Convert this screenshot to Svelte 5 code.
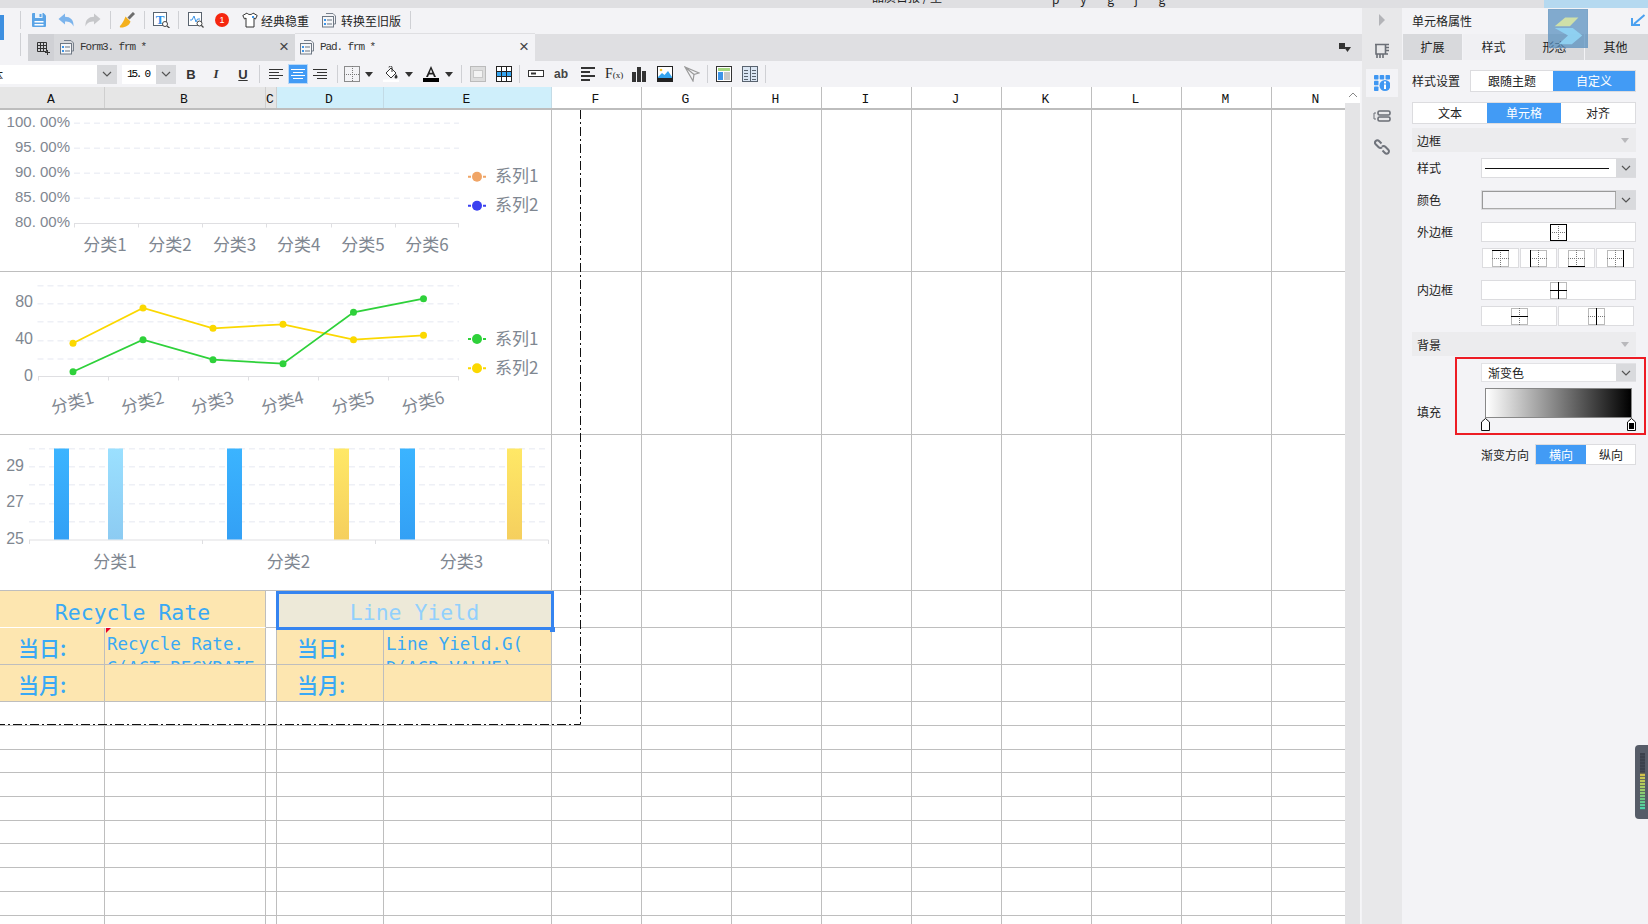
<script>
  const letters = ['A','B','C','D','E','F','G','H','I','J','K','L','M','N'];
  const rest = letters.slice(5);
  const lowerRows = Array.from({ length: 10 });
  const c1x = [105, 170, 234.6, 298.8, 363, 427];
  const c2x = [73, 143, 213, 283, 353.5, 423.5];
  const green = [371.7, 339.7, 359.7, 363.7, 312.3, 298.7];
  const yellow = [343.3, 308, 328.3, 324.3, 339.7, 335.3];
  const pts = (ys) => ys.map((y, i) => `${c2x[i]},${y}`).join(' ');
  const bars = [
    { x: 54, g: 'gBlue' }, { x: 108, g: 'gLight' }, { x: 227, g: 'gBlue' },
    { x: 334, g: 'gYellow' }, { x: 400, g: 'gBlue' }, { x: 507, g: 'gYellow' }
  ];
</script>

{#snippet formIcon()}
  <svg class="ic" viewBox="0 0 16 16">
    <path d="M5 1.500h7l2.500 2.500v8H12" fill="none" stroke="#77808c" />
    <rect x="1.500" y="4.500" width="11" height="10.500" fill="#f6f7f9" stroke="#6f7884" />
    <rect x="3" y="7" width="2" height="2" fill="#3c94e8" />
    <rect x="3" y="11" width="2" height="2" fill="#3c94e8" />
    <rect x="6" y="7" width="5" height="2" fill="#aeb5bd" />
    <rect x="6" y="11" width="5" height="2" fill="#aeb5bd" />
  </svg>
{/snippet}

{#snippet caret(cls)}
  <svg class="caret {cls}" viewBox="0 0 8 5"><path d="M0 0h8L4 5z" fill="#333" /></svg>
{/snippet}

{#snippet chevron()}
  <svg class="chev" viewBox="0 0 10 6"><path d="M1 1l4 4 4-4" fill="none" stroke="#555" stroke-width="1.200" /></svg>
{/snippet}

{#snippet borderIcon(kind)}
  <svg class="bi" viewBox="0 0 17 17">
    <g fill="none" stroke="#777" stroke-dasharray="1 1">
      <rect x="0.500" y="0.500" width="16" height="16" />
      <path d="M8.500 0v17M0 8.500h17" />
    </g>
    <g fill="none" stroke="#000">
      {#if kind === 'outer'}<rect x="0.500" y="0.500" width="16" height="16" />{/if}
      {#if kind === 'top'}<path d="M0 .5h17" />{/if}
      {#if kind === 'left'}<path d="M.5 0v17" />{/if}
      {#if kind === 'bottom'}<path d="M0 16.500h17" />{/if}
      {#if kind === 'right'}<path d="M16.500 0v17" />{/if}
      {#if kind === 'inner' || kind === 'h'}<path d="M0 8.500h17" />{/if}
      {#if kind === 'inner' || kind === 'v'}<path d="M8.500 0v17" />{/if}
    </g>
  </svg>
{/snippet}

{#snippet legend(y, color, label)}
  <line x1="468" x2="486" y1={y} y2={y} stroke={color} stroke-width="2" stroke-dasharray="3 2" />
  <circle cx="477" cy={y} r="5" fill={color} />
  <text class="cjk wide" x="495" y={y - 2}>{label}</text>
{/snippet}

<div class="app">
  <div class="topbar">
    <span class="frag">品质日报 / 坐</span>
    <span class="frag descend">p y g j g</span>
    <span class="topblue"></span>
  </div>

  <div class="main">
    <div class="work">
      <div class="toolbar">
        <span class="logo"></span>
        <span class="sep m16"></span>
        <svg class="ic m10" viewBox="0 0 16 16">
          <path d="M1 2a1 1 0 0 1 1-1h10.500L15 3.500V14a1 1 0 0 1-1 1H2a1 1 0 0 1-1-1z" fill="#5ba4e6" />
          <rect x="4" y="1" width="7.500" height="5" fill="#eaf3fb" />
          <rect x="8.500" y="2" width="2" height="3" fill="#5ba4e6" />
          <rect x="3.500" y="9" width="9" height="1.500" fill="#fff" />
          <rect x="3.500" y="12" width="9" height="1.500" fill="#fff" />
        </svg>
        <svg class="ic m11" viewBox="0 0 16 16"><path d="M.5 7L7 1.500v3.200c5.500 0 9 3.300 8.500 9.800-1.500-3.800-4.500-5-8.500-5v3z" fill="#7cb4ec" /></svg>
        <svg class="ic m11" viewBox="0 0 16 16"><path d="M15.500 7L9 1.500v3.200c-5.500 0-9 3.300-8.500 9.800 1.500-3.800 4.500-5 8.500-5v3z" fill="#c6c7ca" /></svg>
        <span class="sep m9"></span>
        <svg class="ic m8" viewBox="0 0 16 16">
          <path d="M15 1l-5.500 5.500" stroke="#6d6d6d" stroke-width="3" />
          <path d="M6.500 4.500l5 5C10.500 13 7 15.500 2 15.500c-1 0-1.500-.5-1-1.500C3 12 5 8.500 6.500 4.500z" fill="#f4b01c" />
        </svg>
        <span class="sep m9"></span>
        <svg class="ic wide m8" viewBox="0 0 17 16">
          <rect x=".5" y=".5" width="13" height="13" fill="#fff" stroke="#59636f" />
          <text class="tglyph" x="7" y="11.500">T</text>
          <circle cx="12" cy="12" r="2.500" fill="#fff" stroke="#444" />
          <path d="M14 14l2.500 2" stroke="#444" stroke-width="1.300" />
        </svg>
        <span class="sep m8"></span>
        <svg class="ic m9" viewBox="0 0 16 16">
          <rect x=".5" y=".5" width="13" height="13" fill="#fff" stroke="#59636f" />
          <path d="M2 8h2l2-4 2 6 1.500-3H12" fill="none" stroke="#3c94e8" />
          <circle cx="11.500" cy="11.500" r="2.500" fill="#fff" stroke="#444" />
          <path d="M13.500 13.500l2 2" stroke="#444" stroke-width="1.300" />
        </svg>
        <span class="badge m11">1</span>
        <svg class="ic m13" viewBox="0 0 16 16">
          <path d="M5 1L.8 3.500 2.500 7 4 6v9h8V6l1.500 1 1.700-3.500L11 1c-1 2-5 2-6 0z" fill="#fff" stroke="#333" />
          <rect x="10" y="4" width="2" height="2" fill="#3c94e8" />
        </svg>
        <span class="tbtext m3">经典稳重</span>
        <span class="m12 ib">{@render formIcon()}</span>
        <span class="tbtext m4">转换至旧版</span>
        <span class="sep m9"></span>
      </div>

      <div class="tabs">
        <div class="tabs-left"><span class="sep"></span></div>
        <div class="tab-grid">
          <svg class="ic" viewBox="0 0 16 16">
            <path d="M2.500 2.500h9v9h-9zM2.500 5.500h9M2.500 8.500h9M5.500 2.500v9M8.500 2.500v9" fill="none" stroke="#333" />
            <path d="M12.500 10v5M10 12.500h5" stroke="#333" fill="none" />
          </svg>
        </div>
        <div class="tab">
          {@render formIcon()}
          <span class="tabname">Form3. frm *</span>
          <span class="close">×</span>
        </div>
        <div class="tab on">
          {@render formIcon()}
          <span class="tabname">Pad. frm *</span>
          <span class="close">×</span>
        </div>
        <div class="tabs-fill">
          <svg class="pin" viewBox="0 0 12 9"><path d="M0 0h6v6H0z" fill="#333" /><path d="M5 4h7L8.500 9z" fill="#333" /></svg>
        </div>
      </div>

      <div class="format">
        <div class="fontsel"><span class="fontname">体</span><span class="fbtn">{@render chevron()}</span></div>
        <div class="sizesel"><span class="sizeval">15. 0</span><span class="fbtn">{@render chevron()}</span></div>
        <span class="ftxt bold m7">B</span>
        <span class="ftxt ital m9">I</span>
        <span class="ftxt under m11">U</span>
        <span class="sep m8"></span>
        <svg class="ic m8" viewBox="0 0 16 16"><path d="M1 3.500h14M1 6.500h10M1 9.500h14M1 12.500h10" stroke="#333" /></svg>
        <span class="alignon m4">
          <svg class="ic" viewBox="0 0 16 16"><path d="M1 3.500h14M3 6.500h10M1 9.500h14M3 12.500h10" stroke="#fff" /></svg>
        </span>
        <svg class="ic m4" viewBox="0 0 16 16"><path d="M1 3.500h14M5 6.500h10M1 9.500h14M5 12.500h10" stroke="#333" /></svg>
        <span class="sep m9"></span>
        <svg class="ic m6" viewBox="0 0 16 16"><rect x=".5" y=".5" width="15" height="15" fill="none" stroke="#222" stroke-dasharray="1 1" /><path d="M8.500 0v16M0 8.500h16" stroke="#777" stroke-dasharray="1 1" /></svg>
        {@render caret('m5')}
        <svg class="ic m10" viewBox="0 0 16 16">
          <path d="M3 7l5-5 5 5-5 5z" fill="#fff" stroke="#333" />
          <path d="M6 1.500a1.500 1.500 0 0 1 3 0V6" fill="none" stroke="#333" />
          <path d="M13 8c1 1.500 1.500 2 1.500 3a1.500 1.500 0 0 1-3 0" fill="#333" />
          <rect y="13.500" width="16" height="2.500" fill="#fff" />
        </svg>
        {@render caret('m6')}
        <svg class="ic m10" viewBox="0 0 16 16">
          <path d="M8 0L3 11h2l1-2.600h4L11 11h2L8 0zM6.700 6.700L8 3.200l1.300 3.500z" fill="#222" />
          <rect y="12" width="16" height="4" fill="#000" />
        </svg>
        {@render caret('m6')}
        <span class="sep m8"></span>
        <svg class="ic m8" viewBox="0 0 16 16"><rect x=".5" y=".5" width="15" height="15" fill="#ddd" stroke="#bbb" /><rect x="3.500" y="4.500" width="9" height="7" fill="#f3f3f3" stroke="#c8c8c8" /></svg>
        <svg class="ic m10" viewBox="0 0 16 16">
          <rect x=".5" y=".5" width="15" height="15" fill="#fff" stroke="#222" />
          <rect x="1" y="5" width="14" height="5" fill="#35a4ee" />
          <path d="M0 5.500h16M0 10.500h16M5.500 0v16M10.500 0v16" stroke="#222" />
        </svg>
        <span class="sep m7"></span>
        <svg class="ic m8" viewBox="0 0 16 16"><rect x=".5" y="4.500" width="15" height="6" fill="#fff" stroke="#333" /><path d="M3 7.500h5" stroke="#333" stroke-width="2" /></svg>
        <span class="abtxt m9">ab</span>
        <svg class="ic m11" viewBox="0 0 16 16"><path d="M1 2h14M1 6h9M1 10h14M1 14h9" stroke="#333" stroke-width="2" /></svg>
        <span class="fxtxt m9">F<small>(x)</small></span>
        <svg class="ic m10" viewBox="0 0 16 16"><path d="M1 6h4v10H1zM6 1h4v15H6zM11 5h4v11h-4z" fill="#333" /></svg>
        <svg class="ic m10" viewBox="0 0 16 16">
          <rect x=".5" y=".5" width="15" height="15" fill="#fff" stroke="#222" />
          <circle cx="4" cy="4" r="1.300" fill="#f2c230" />
          <path d="M1 11l4-4 2.500 2L11 5l4 6v1H1z" fill="#35a4ee" />
          <rect y="12" width="16" height="4" fill="#222" />
        </svg>
        <svg class="ic m11" viewBox="0 0 16 16"><path d="M1 1l14 6-5 1.500L9 15z M1 1l9 7.500" fill="none" stroke="#9a9a9a" stroke-width="1.200" /></svg>
        <span class="sep m7"></span>
        <svg class="ic m8" viewBox="0 0 16 16">
          <rect x=".5" y=".5" width="15" height="15" fill="#fff" stroke="#333" />
          <rect x="2" y="2" width="12" height="3" fill="#a6d880" />
          <rect x="2" y="6" width="5" height="8" fill="#3c94e8" />
          <rect x="8" y="6" width="6" height="8" fill="#c8c8c8" />
        </svg>
        <svg class="ic m10" viewBox="0 0 16 16">
          <rect x=".5" y=".5" width="15" height="15" fill="#dbe6f3" stroke="#59636f" />
          <path d="M8.500 0v16M2 4.500h4M2 7.500h4M2 10.500h4M2 13.500h4M10 4.500h4M10 7.500h4M10 10.500h4M10 13.500h4" stroke="#59636f" />
        </svg>
        <span class="sep m7"></span>
      </div>

      <div class="sheetwrap">
        <div class="sheet">
          <div class="row head">
            {#each letters as l, i}
              <div class="hcell" class:dim={i < 3} class:hl={i === 3 || i === 4}>{l}</div>
            {/each}
          </div>
          <div class="body">
            <div class="cell span5">
              <svg class="chart" width="552" height="162" viewBox="0 110 552 162">
                {#each [123.3, 148.3, 173.3, 198.3] as y}
                  <line class="grid" x1="74" x2="459" y1={y} y2={y} />
                {/each}
                <path class="axis" d="M74 223.500H459M74.500 223.500v4M138.500 223.500v4M202.500 223.500v4M266.500 223.500v4M331.500 223.500v4M395.500 223.500v4M458.500 223.500v4" />
                {#each [['100. 00%', 121], ['95. 00%', 146.7], ['90. 00%', 171.7], ['85. 00%', 196], ['80. 00%', 221]] as t}
                  <text class="num end" x="70" y={t[1]}>{t[0]}</text>
                {/each}
                {#each c1x as x, i}
                  <text class="cjk wide mid" {x} y="243">分类{i + 1}</text>
                {/each}
                {@render legend(176.7, '#f0a566', '系列1')}
                {@render legend(205.7, '#3a40f0', '系列2')}
              </svg>
            </div>
            {#each rest as _}<div class="cell"></div>{/each}

            <div class="cell span5">
              <svg class="chart" width="552" height="163" viewBox="0 272 552 163">
                {#each [285.7, 303.7, 321.7, 340.7, 359] as y}
                  <line class="grid" x1="37.500" x2="459" y1={y} y2={y} />
                {/each}
                <path class="axis" d="M38 376.500H459M38.500 376.500v4M108.500 376.500v4M178.500 376.500v4M248.500 376.500v4M318.500 376.500v4M388.500 376.500v4M458.500 376.500v4" />
                {#each [['80', 301.7], ['40', 338.3], ['0', 375]] as t}
                  <text class="num end big" x="33" y={t[1]}>{t[0]}</text>
                {/each}
                <polyline class="ln" points={pts(yellow)} stroke="#fbd800" />
                <polyline class="ln" points={pts(green)} stroke="#2ed13a" />
                {#each yellow as y, i}<circle cx={c2x[i]} cy={y} r="3.500" fill="#fbd800" />{/each}
                {#each green as y, i}<circle cx={c2x[i]} cy={y} r="3.500" fill="#2ed13a" />{/each}
                {#each c2x as x, i}
                  <text class="cjk wide mid" x={x - 1} y="401" transform="rotate(-15 {x} 401)">分类{i + 1}</text>
                {/each}
                {@render legend(339, '#2ed13a', '系列1')}
                {@render legend(368.3, '#fbd800', '系列2')}
              </svg>
            </div>
            {#each rest as _}<div class="cell"></div>{/each}

            <div class="cell span5">
              <svg class="chart" width="552" height="156" viewBox="0 434.500 552 156">
                <defs>
                  <linearGradient id="gBlue" x1="0" y1="0" x2="0" y2="1"><stop offset="0" stop-color="#3bb4ff" /><stop offset="1" stop-color="#33a0f5" /></linearGradient>
                  <linearGradient id="gLight" x1="0" y1="0" x2="0" y2="1"><stop offset="0" stop-color="#9be0ff" /><stop offset="1" stop-color="#8ccbf2" /></linearGradient>
                  <linearGradient id="gYellow" x1="0" y1="0" x2="0" y2="1"><stop offset="0" stop-color="#ffe866" /><stop offset="1" stop-color="#f5cf5e" /></linearGradient>
                </defs>
                {#each [448.3, 466.3, 484.3, 503.3, 521.3] as y}
                  <line class="grid" x1="29" x2="548.400" y1={y} y2={y} />
                {/each}
                <path class="axis" d="M29 539.500H548.500M29.500 539.500v4M202.500 539.500v4M375.500 539.500v4M548.500 539.500v4" />
                {#each bars as b}
                  <rect x={b.x} y="448" width="15" height="91" fill="url(#{b.g})" />
                {/each}
                {#each [['29', 464.500], ['27', 501.200], ['25', 537.500]] as t}
                  <text class="num end big" x="24" y={t[1]}>{t[0]}</text>
                {/each}
                {#each [115, 288.5, 461.5] as x, i}
                  <text class="cjk wide mid" {x} y="560">分类{i + 1}</text>
                {/each}
              </svg>
            </div>
            {#each rest as _}<div class="cell"></div>{/each}

            <div class="cell span2 gold title whiteline">Recycle Rate</div>
            <div class="cell"></div>
            <div class="cell span2 picked title">Line Yield<span class="handle"></span></div>
            {#each rest as _}<div class="cell"></div>{/each}

            <div class="cell gold label">当日:</div>
            <div class="cell gold val"><span class="flag"></span>Recycle Rate.<br />G(ACT_RECYRATE</div>
            <div class="cell"></div>
            <div class="cell gold label second">当日:</div>
            <div class="cell gold val">Line Yield.G(<br />D(ACR_VALUE)</div>
            {#each rest as _}<div class="cell"></div>{/each}

            <div class="cell gold label">当月:</div>
            <div class="cell gold"></div>
            <div class="cell"></div>
            <div class="cell gold label second">当月:</div>
            <div class="cell gold"></div>
            {#each rest as _}<div class="cell"></div>{/each}

            {#each lowerRows as _}
              {#each letters as __}<div class="cell"></div>{/each}
            {/each}
          </div>
          <svg class="marquee" width="582" height="616" viewBox="0 0 582 616">
            <path d="M580.500 0V614.500H0" fill="none" stroke="#111" stroke-dasharray="9 3 2 3" />
          </svg>
        </div>
        <div class="scroll"><span class="scrollup"><svg viewBox="0 0 10 6"><path d="M1 5l4-4 4 4" fill="none" stroke="#888" /></svg></span></div>
      </div>
    </div>

    <div class="strip">
      <svg class="stripicon arrow" viewBox="0 0 6 12"><path d="M0 0l6 6-6 6z" fill="#b3b4b8" /></svg>
      <svg class="stripicon first" viewBox="0 0 16 16">
        <path d="M1 1.500h14M2 1.500V11h9.500V1.500M11.500 4.500H15M11.500 7.500H15M11.500 11H14M3 11v4M6 11v4M9 11v4" fill="none" stroke="#6a6e76" stroke-width="1.600" />
      </svg>
      <div class="stripon">
        <svg class="stripicon" viewBox="0 0 16 16">
          <rect x="0" y="0" width="4.500" height="4.500" rx=".8" fill="#3f97f2" />
          <rect x="5.700" y="0" width="4.500" height="4.500" rx=".8" fill="#3f97f2" />
          <rect x="11.500" y="0" width="4.500" height="4.500" rx=".8" fill="#3f97f2" />
          <rect x="0" y="5.700" width="4.500" height="4.500" rx=".8" fill="#3f97f2" />
          <rect x="0" y="11.500" width="4.500" height="4.500" rx=".8" fill="#3f97f2" />
          <circle cx="11" cy="10.500" r="5.500" fill="#3f97f2" />
          <rect x="10" y="9.500" width="2" height="4.500" fill="#fff" />
          <rect x="10" y="6.500" width="2" height="2" fill="#fff" />
        </svg>
      </div>
      <svg class="stripicon third" viewBox="0 0 18 12">
        <rect x="5" y="1" width="12" height="4" rx="1.500" fill="none" stroke="#6a6e76" stroke-width="1.600" />
        <rect x="5" y="7" width="12" height="4" rx="1.500" fill="none" stroke="#6a6e76" stroke-width="1.600" />
        <path d="M3 3H1v6h2" fill="none" stroke="#6a6e76" />
      </svg>
      <svg class="stripicon fourth" viewBox="0 0 16 16">
        <path d="M7.500 4.500L5 2a2.300 2.300 0 0 0-3.300 3.300l3 3a2.300 2.300 0 0 0 3.300 0" fill="none" stroke="#70747c" stroke-width="2" />
        <path d="M8.500 11.500L11 14a2.300 2.300 0 0 0 3.300-3.300l-3-3a2.300 2.300 0 0 0-3.300 0" fill="none" stroke="#70747c" stroke-width="2" />
      </svg>
    </div>

    <aside class="panel">
      <div class="phead">
        <span>单元格属性</span>
        <svg class="pinarrow" viewBox="0 0 16 12"><path d="M14.500 1L4 10M2 4v7h8" fill="none" stroke="#4aa0f0" stroke-width="2" /></svg>
      </div>
      <div class="ptabs">
        <span class="ptab">扩展</span>
        <span class="ptab on">样式</span>
        <span class="ptab">形态</span>
        <span class="ptab last">其他</span>
      </div>
      <div class="pbody">
        <div class="prow">
          <span class="plabel tight">样式设置</span>
          <div class="seg two"><span>跟随主题</span><span class="on">自定义</span></div>
        </div>
        <div class="seg three"><span>文本</span><span class="on">单元格</span><span>对齐</span></div>
        <div class="section">边框<i></i></div>
        <div class="frow m6"><span class="plabel">样式</span>
          <div class="sel"><span class="lineprev"></span><span class="selbtn">{@render chevron()}</span></div></div>
        <div class="frow m12"><span class="plabel">颜色</span>
          <div class="sel"><span class="colorprev"></span><span class="selbtn">{@render chevron()}</span></div></div>
        <div class="frow m12"><span class="plabel">外边框</span>
          <div class="bbox">{@render borderIcon('outer')}</div></div>
        <div class="frow m6"><span></span>
          <div class="bset four">
            <span>{@render borderIcon('top')}</span><span>{@render borderIcon('left')}</span><span>{@render borderIcon('bottom')}</span><span>{@render borderIcon('right')}</span>
          </div></div>
        <div class="frow m12"><span class="plabel">内边框</span>
          <div class="bbox">{@render borderIcon('inner')}</div></div>
        <div class="frow m6"><span></span>
          <div class="bset twoc"><span>{@render borderIcon('h')}</span><span>{@render borderIcon('v')}</span></div></div>
        <div class="section m6s">背景<i></i></div>
        <div class="fillblock">
          <span class="plabel filllabel">填充</span>
          <div class="fillright">
            <div class="sel small"><span class="seltext">渐变色</span><span class="selbtn">{@render chevron()}</span></div>
            <div class="gradwrap">
              <div class="grad"></div>
              <div class="stops">
                <svg class="stop" viewBox="0 0 9 13"><path d="M.5 12.500V4L4.500.5 8.500 4v8.500z" fill="#fff" stroke="#111" /></svg>
                <svg class="stop" viewBox="0 0 9 13"><path d="M.5 12.500V4L4.500.5 8.500 4v8.500z" fill="#fff" stroke="#111" /><rect x="2" y="5" width="5" height="6" fill="#000" /></svg>
              </div>
            </div>
          </div>
        </div>
        <div class="dirrow">
          <span class="dirlabel">渐变方向</span>
          <div class="seg dir"><span class="on">横向</span><span>纵向</span></div>
        </div>
      </div>
    </aside>
  </div>

  <div class="floatlogo">
    <svg viewBox="0 0 40 39">
      <path d="M6 17L17 8h14l-9 9z" fill="#d3e3a6" opacity=".95" />
      <path d="M6 19h19l10 8-11 9H10l10-9z" fill="#8fd2f2" opacity=".95" />
    </svg>
  </div>
  <div class="meter"><span></span></div>
</div>

<style>
  :global(body) {
    margin: 0;
    overflow: hidden;
    background: #fff;
  }
  .app {
    position: relative;
    width: 1648px;
    height: 924px;
    overflow: hidden;
    font-family: "Noto Sans CJK SC", "Liberation Sans", sans-serif;
    font-size: 12px;
    color: #222;
  }
  .topbar {
    height: 8px;
    background: #dfdfe2;
    display: flex;
    overflow: hidden;
    line-height: 8px;
  }
  .frag {
    margin-left: 872px;
    font-size: 12px;
    white-space: nowrap;
    transform: translateY(-7px);
    height: 8px;
  }
  .descend {
    margin-left: 110px;
    letter-spacing: 9px;
    transform: translateY(-5px);
  }
  .topblue {
    margin-left: auto;
    width: 104px;
    background: #b5d9f0;
  }
  .main {
    display: flex;
    height: 916px;
  }
  .work {
    width: 1362px;
    flex: none;
    display: flex;
    flex-direction: column;
    background: #f3f3f6;
  }
  .toolbar {
    height: 25px;
    box-sizing: border-box;
    padding-bottom: 1px;
    display: flex;
    align-items: center;
    flex: none;
  }
  .logo {
    width: 4px;
    height: 25px;
    background: #3d8fe0;
    margin-top: 7px;
    align-self: flex-start;
    position: relative;
    z-index: 1;
  }
  .ic {
    width: 16px;
    height: 16px;
    flex: none;
    display: block;
  }
  .ic.wide {
    width: 17px;
  }
  .ib {
    display: block;
  }
  .sep {
    width: 1px;
    height: 18px;
    background: #cfd0d4;
    flex: none;
    display: block;
  }
  .m3 { margin-left: 3px; }
  .m4 { margin-left: 4px; }
  .m5 { margin-left: 5px; }
  .m6 { margin-left: 6px; }
  .m7 { margin-left: 7px; }
  .m8 { margin-left: 8px; }
  .m9 { margin-left: 9px; }
  .m10 { margin-left: 10px; }
  .m11 { margin-left: 11px; }
  .m12 { margin-left: 12px; }
  .m13 { margin-left: 13px; }
  .m16 { margin-left: 16px; }
  .tglyph {
    font: bold 13px "Liberation Serif", serif;
    fill: #2f8fe8;
    text-anchor: middle;
  }
  .badge {
    width: 14px;
    height: 14px;
    border-radius: 50%;
    background: #f5260f;
    color: #fff;
    font: 9px/14px "Liberation Sans", sans-serif;
    text-align: center;
    flex: none;
  }
  .tbtext {
    font-size: 12px;
    white-space: nowrap;
    flex: none;
  }
  .tabs {
    height: 28px;
    display: flex;
    flex: none;
  }
  .tabs-left {
    width: 28px;
    flex: none;
    padding-left: 20px;
    box-sizing: border-box;
  }
  .tabs-left .sep {
    height: 23px;
  }
  .tab-grid {
    width: 26px;
    background: #d0d1d5;
    display: flex;
    align-items: center;
    justify-content: flex-end;
    padding-right: 3px;
    box-sizing: border-box;
    flex: none;
    margin-top: 1px;
  }
  .tab {
    width: 241px;
    flex: none;
    display: flex;
    align-items: center;
    background: #d8d9dc;
    padding: 0 0 2px 5px;
    box-sizing: border-box;
    margin-top: 1px;
  }
  .tab.on {
    width: 240px;
    background: #f3f3f6;
    padding-left: 4px;
    margin-top: 0;
    border-top: 1px solid #dfdfe2;
  }
  .tabname {
    font: 11px "Liberation Mono", monospace;
    letter-spacing: -1.100px;
    margin-left: 5px;
    color: #333;
    white-space: pre;
  }
  .close {
    margin-left: auto;
    margin-right: 6px;
    font: 17px/1 "Liberation Sans", sans-serif;
    color: #444;
  }
  .tabs-fill {
    flex: 1;
    background: #dfdfe2;
    display: flex;
    align-items: center;
    justify-content: flex-end;
    padding-right: 11px;
    margin-top: 1px;
  }
  .pin {
    width: 12px;
    height: 9px;
  }
  .format {
    height: 26px;
    display: flex;
    align-items: center;
    flex: none;
  }
  .fontsel,
  .sizesel {
    height: 19px;
    display: flex;
    flex: none;
    background: #fff;
  }
  .fontsel {
    width: 117px;
  }
  .sizesel {
    width: 54px;
    margin-left: 5px;
  }
  .fontname {
    flex: 1;
    font-size: 12px;
    line-height: 19px;
    margin-left: -9px;
    overflow: hidden;
  }
  .sizeval {
    flex: 1;
    font: 11px/19px "Liberation Mono", monospace;
    letter-spacing: -2.200px;
    padding-left: 5px;
    white-space: pre;
    color: #000;
  }
  .fbtn,
  .selbtn {
    width: 20px;
    flex: none;
    background: #d9dadd;
    display: flex;
    align-items: center;
    justify-content: center;
  }
  .chev {
    width: 10px;
    height: 6px;
    display: block;
  }
  .caret {
    width: 8px;
    height: 5px;
    flex: none;
    display: block;
  }
  .ftxt {
    width: 16px;
    text-align: center;
    flex: none;
    font: bold 13px "Liberation Sans", sans-serif;
    color: #333;
  }
  .ital {
    font: italic bold 13px "Liberation Serif", serif;
  }
  .under {
    text-decoration: underline;
  }
  .alignon {
    width: 20px;
    height: 20px;
    background: #429bf5;
    box-shadow: inset 0 0 0 1px #b9d9f8;
    display: flex;
    align-items: center;
    justify-content: center;
    flex: none;
  }
  .abtxt {
    width: 16px;
    flex: none;
    font: bold 12px "Liberation Sans", sans-serif;
    color: #444;
    text-align: center;
  }
  .fxtxt {
    width: 16px;
    flex: none;
    font: 14px "Liberation Serif", serif;
    color: #222;
    white-space: nowrap;
  }
  .fxtxt small {
    font-size: 9px;
  }
  .sheetwrap {
    flex: 1;
    display: flex;
    min-height: 0;
  }
  .sheet {
    width: 1345px;
    position: relative;
    overflow: hidden;
    background: #fff;
    flex: none;
  }
  .row,
  .body {
    display: grid;
    grid-template-columns: 105px 161px 11px 107px 168px repeat(9, 90px);
  }
  .head {
    height: 23px;
    border-bottom: 2px solid #bdbdbd;
    box-sizing: border-box;
  }
  .hcell {
    font: 13px/25px "Liberation Mono", monospace;
    color: #111;
    text-align: center;
    padding-right: 2px;
    border-right: 1px solid #bebebe;
    box-sizing: border-box;
    background: #fff;
    overflow: hidden;
  }
  .hcell.dim {
    background: #e6e6e6;
    border-right-color: #cfcfcf;
  }
  .hcell.hl {
    background: #cfeffb;
    border-right-color: #c3dbe6;
  }
  .body {
    grid-template-rows: 162px 162.5px 156px 37px 37.5px 37px 24px;
    grid-auto-rows: 23.7px;
  }
  .cell {
    border-right: 1px solid #bebebe;
    border-bottom: 1px solid #bebebe;
    box-sizing: border-box;
    min-width: 0;
    position: relative;
  }
  .span5 {
    grid-column: span 5;
  }
  .span2 {
    grid-column: span 2;
  }
  .chart {
    display: block;
    position: absolute;
    left: 0;
    top: 0;
  }
  .grid {
    stroke: #eef0f6;
    stroke-width: 1.400;
    stroke-dasharray: 6 4;
  }
  .axis {
    stroke: #dfdfe2;
    stroke-width: 1;
    fill: none;
  }
  .ln {
    fill: none;
    stroke-width: 1.800;
  }
  .num {
    font: 15px "Liberation Sans", sans-serif;
    fill: #7f8791;
    dominant-baseline: central;
  }
  .num.big {
    font-size: 16px;
  }
  .end {
    text-anchor: end;
  }
  .mid {
    text-anchor: middle;
  }
  .cjk {
    font: 16px "Noto Sans CJK SC", "Liberation Sans", sans-serif;
    fill: #7f8791;
    dominant-baseline: central;
  }
  .cjk.wide {
    font-size: 17px;
  }
  .gold {
    background: #fde6b0;
  }
  .whiteline {
    border-bottom-color: #fff;
  }
  .title {
    font: 21.500px/43px "DejaVu Sans Mono", monospace;
    text-align: center;
    color: #39a9f5;
  }
  .picked {
    background: #ede9d8;
    color: #92d0fd;
    z-index: 2;
    border: none;
  }
  .picked::before {
    content: "";
    position: absolute;
    inset: 0 -2px -2px -1px;
    border: 3px solid #3584f0;
  }
  .handle {
    position: absolute;
    right: -3px;
    bottom: -4px;
    width: 5px;
    height: 5px;
    background: #3584f0;
  }
  .label {
    font: 500 21px/39px "Noto Sans CJK SC", sans-serif;
    color: #39a9f5;
    padding-left: 18px;
    white-space: nowrap;
    overflow: hidden;
  }
  .label.second {
    padding-left: 20px;
  }
  .val {
    font: 17.500px/24px "DejaVu Sans Mono", monospace;
    color: #39a9f5;
    padding: 4px 0 0 2px;
    overflow: hidden;
    white-space: nowrap;
  }
  .flag {
    position: absolute;
    left: 1px;
    top: 0;
    width: 0;
    height: 0;
    border-top: 5px solid #e8002a;
    border-right: 5px solid transparent;
  }
  .marquee {
    position: absolute;
    left: 0;
    top: 23px;
    z-index: 3;
    pointer-events: none;
  }
  .scroll {
    width: 16px;
    flex: none;
    background: #e4e4e6;
    border-right: 1px solid #f6f6f8;
    box-sizing: border-box;
  }
  .scrollup {
    display: flex;
    height: 16px;
    background: #fff;
    align-items: center;
    justify-content: center;
  }
  .scrollup svg {
    width: 10px;
    height: 6px;
  }
  .strip {
    width: 40px;
    flex: none;
    background: #e8e8ea;
    display: flex;
    flex-direction: column;
    align-items: center;
  }
  .stripicon {
    display: block;
    width: 16px;
    height: 16px;
    flex: none;
  }
  .stripicon.arrow {
    width: 6px;
    height: 12px;
    margin-top: 6px;
  }
  .stripicon.first {
    margin-top: 17px;
  }
  .stripon {
    width: 32px;
    height: 28px;
    background: #f3f3f6;
    display: flex;
    align-items: center;
    justify-content: center;
    margin-top: 10px;
  }
  .stripicon.third {
    width: 18px;
    height: 12px;
    margin-top: 13px;
  }
  .stripicon.fourth {
    margin-top: 17px;
  }
  .panel {
    width: 246px;
    flex: none;
    background: #f3f3f6;
  }
  .phead {
    height: 26px;
    box-sizing: border-box;
    padding: 0 2px 2px 10px;
    display: flex;
    align-items: center;
    justify-content: space-between;
    font-size: 12px;
  }
  .pinarrow {
    width: 16px;
    height: 12px;
  }
  .ptabs {
    display: grid;
    grid-template-columns: 59px 61px 59px 63px;
    gap: 1px;
    height: 26px;
    padding-left: 1px;
  }
  .ptab {
    background: #d8d9dc;
    text-align: center;
    line-height: 25px;
    font-size: 12px;
  }
  .ptab.on {
    background: #f0f0f3;
  }
  .ptab.last {
    padding-right: 2px;
  }
  .pbody {
    padding: 10px 12px 0 10px;
  }
  .prow {
    display: flex;
    align-items: center;
    height: 22px;
  }
  .plabel {
    padding-left: 5px;
    font-size: 12px;
    white-space: nowrap;
    margin-top: -2px;
  }
  .plabel.tight {
    padding-left: 0;
    width: 58px;
    flex: none;
  }
  .seg {
    display: grid;
    border: 1px solid #dcdcdf;
    background: #fff;
    height: 22px;
    box-sizing: border-box;
    font-size: 12px;
    line-height: 20px;
    text-align: center;
  }
  .seg .on {
    background: #429bf5;
    color: #fff;
  }
  .seg.two {
    grid-template-columns: 82px 82px;
    width: 166px;
  }
  .seg.three {
    grid-template-columns: 74px 74px 74px;
    margin-top: 10px;
  }
  .section {
    height: 24px;
    margin-top: 4px;
    background: #ececee;
    display: flex;
    align-items: center;
    justify-content: space-between;
    padding: 0 7px 0 5px;
    font-size: 12px;
  }
  .section i {
    width: 0;
    height: 0;
    border-left: 4px solid transparent;
    border-right: 4px solid transparent;
    border-top: 5px solid #b9b9bc;
  }
  .section.m6s {
    margin-top: 6px;
  }
  .frow {
    display: grid;
    grid-template-columns: 69px 155px;
    align-items: center;
    height: 20px;
  }
  .frow.m6 {
    margin-left: 0;
    margin-top: 6px;
  }
  .frow.m12 {
    margin-left: 0;
    margin-top: 12px;
  }
  .sel {
    height: 20px;
    display: flex;
    background: #fff;
    border: 1px solid #dcdcdf;
    border-right: none;
    box-sizing: border-box;
  }
  .lineprev {
    flex: 1;
    margin: 9px 7px 0 3px;
    height: 1px;
    background: #111;
  }
  .colorprev {
    flex: 1;
    background: #f3f3f6;
    box-shadow: inset 1px 1px 0 #999, inset -1px -1px 0 #aaa;
  }
  .seltext {
    flex: 1;
    padding-left: 6px;
    line-height: 17px;
  }
  .bi {
    width: 17px;
    height: 17px;
    display: block;
  }
  .bbox {
    height: 20px;
    background: #fff;
    border: 1px solid #dcdcdf;
    box-sizing: border-box;
    display: flex;
    align-items: center;
    justify-content: center;
  }
  .bset {
    display: grid;
    height: 20px;
    gap: 1px;
  }
  .bset.four {
    grid-template-columns: 37px 37px 37px 38px;
    padding-left: 1px;
  }
  .bset.twoc {
    grid-template-columns: 76px 76px;
  }
  .bset span {
    background: #fff;
    border: 1px solid #dcdcdf;
    box-sizing: border-box;
    display: flex;
    align-items: center;
    justify-content: center;
  }
  .fillblock {
    position: relative;
    display: grid;
    grid-template-columns: 69px 155px;
    margin-top: 7px;
  }
  .fillblock::after {
    content: "";
    position: absolute;
    left: 43px;
    right: -10px;
    top: -6px;
    bottom: -4px;
    border: 2px solid #ed1c24;
    pointer-events: none;
  }
  .filllabel {
    align-self: end;
    margin-bottom: 11px;
  }
  .sel.small {
    height: 19px;
    border-color: #e2e2e5;
  }
  .gradwrap {
    margin: 6px 4px 0 4px;
  }
  .grad {
    height: 30px;
    box-sizing: border-box;
    border: 1px solid #888;
    background: linear-gradient(90deg, #fff, #000);
  }
  .stops {
    display: flex;
    justify-content: space-between;
    margin: 0 -4px;
    height: 13px;
  }
  .stop {
    width: 9px;
    height: 13px;
    display: block;
  }
  .dirrow {
    display: flex;
    align-items: center;
    margin-top: 13px;
    padding-left: 69px;
  }
  .dirlabel {
    width: 54px;
    flex: none;
    font-size: 12px;
    white-space: nowrap;
  }
  .seg.dir {
    grid-template-columns: 50px 50px;
    height: 21px;
    width: 101px;
    line-height: 19px;
  }
  .floatlogo {
    position: absolute;
    left: 1548px;
    top: 9px;
    width: 40px;
    height: 39px;
    background: rgba(84, 142, 190, 0.72);
    border: 1px solid rgba(120, 160, 195, 0.5);
    box-sizing: border-box;
  }
  .floatlogo svg {
    width: 100%;
    height: 100%;
    display: block;
  }
  .meter {
    position: absolute;
    left: 1635px;
    top: 745px;
    width: 13px;
    height: 74px;
    background: #565c68;
    border-radius: 4px 0 0 4px;
  }
  .meter span {
    position: absolute;
    left: 5px;
    top: 8px;
    width: 5px;
    height: 57px;
    background:
      repeating-linear-gradient(180deg, transparent 0 2px, rgba(70, 76, 88, 0.7) 2px 3px),
      linear-gradient(180deg, #3c414c 0 34%, #d8c24a 36%, #a8cf62 60%, #62c98a 85%, #48d8b0 100%);
  }
</style>
